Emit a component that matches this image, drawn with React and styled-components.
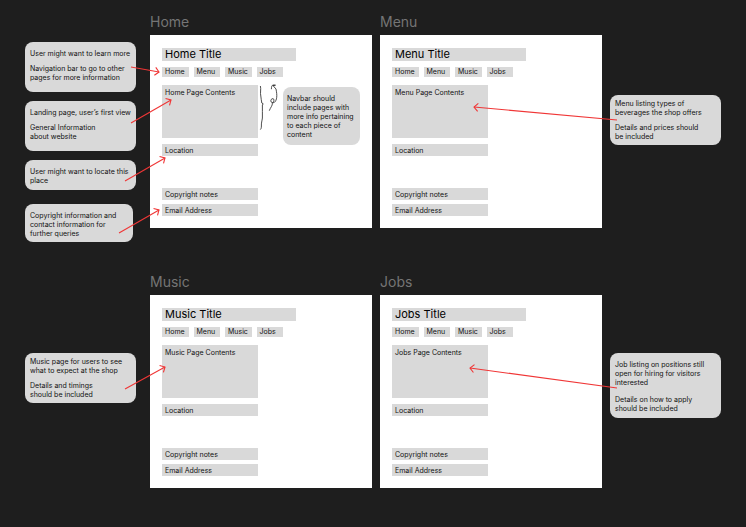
import React from "react";
import styled, { createGlobalStyle } from "styled-components";

const GlobalStyle = createGlobalStyle`
  *, *::before, *::after { box-sizing: border-box; }
  body {
    margin: 0;
    background: #1e1e1e;
    color: #111111;
    font-family: Inter, "Liberation Sans", sans-serif;
  }
  h1, h2, p { margin: 0; font-weight: 400; }
`;

const Canvas = styled.main`
  position: relative;
  display: flex;
  flex-direction: column;
  gap: 31px;
  min-width: 746px;
  min-height: 100vh;
  padding: 13px 25px 39px;
  font-size: 7px;
  line-height: 9px;
`;

const Band = styled.section`
  display: grid;
  grid-template-columns: 117px 1fr 1fr 111px;
  align-items: start;
  column-gap: 8px;
`;

const NoteColumn = styled.aside`
  display: flex;
  flex-direction: column;
  align-items: flex-start;
  gap: 9px;
  padding-top: ${(p) => p.$top}px;
`;

const Note = styled.div`
  width: ${(p) => p.$width || 111}px;
  margin-top: ${(p) => p.$spaced || 0}px;
  padding: ${(p) => (p.$tight ? 4 : 7)}px ${(p) => p.$inset || 5}px ${(p) => p.$bottom}px;
  border-radius: 8px;
  background: #d9d9d9;
  white-space: nowrap;

  p + p { margin-top: ${(p) => p.$gap || 6}px; }
`;

const Screen = styled.article`
  display: flex;
  flex-direction: column;
  gap: 4px;
`;

const ScreenName = styled.h1`
  color: #757575;
  font-size: 14px;
  line-height: 18px;
`;

const Frame = styled.div`
  padding: 13px 12px 12px;
  background: #ffffff;
`;

const TitleBar = styled.h2`
  width: 134px;
  padding-left: 3px;
  background: #d9d9d9;
  color: #000000;
  font-size: 11px;
  line-height: 13px;
`;

const Nav = styled.nav`
  display: flex;
  gap: 5px;
  width: 121px;
  margin: 6px 0 8px;
`;

const NavLink = styled.a`
  flex: 1;
  padding-left: 3px;
  background: #d9d9d9;
  color: inherit;
  line-height: 10px;
  text-decoration: none;
`;

const Body = styled.div`
  display: flex;
`;

const Blocks = styled.div`
  display: flex;
  flex-direction: column;
  width: 96px;
`;

const Block = styled.div`
  min-height: ${(p) => (p.$tall ? 53 : 12)}px;
  margin-top: ${(p) => p.$above || 0}px;
  padding: ${(p) => (p.$tall ? 3 : 2)}px 3px 1px;
  background: #d9d9d9;
`;

const FrameNote = styled.div`
  display: flex;
  align-items: flex-start;
  gap: 3px;
  padding-left: 2px;
`;

const Sketch = styled.svg`
  width: 20px;
  height: 46px;
  overflow: visible;
  fill: none;
  stroke: #222222;
  stroke-width: 0.8;
`;

const Arrows = styled.svg`
  position: absolute;
  top: 0;
  left: 0;
  width: 746px;
  height: 527px;
  pointer-events: none;
  fill: none;
  stroke: #f03636;
  stroke-width: 1.1;
`;

const arrows = [
  [131, 67, 159, 72],
  [131, 123, 171, 100],
  [125, 181, 165, 158],
  [119, 233, 159, 210],
  [617, 120, 474, 107],
  [125, 389, 165, 367],
  [617, 388, 470, 368],
];

function Arrow({ from: [x1, y1, x2, y2] }) {
  const angle = (Math.atan2(y2 - y1, x2 - x1) * 180) / Math.PI;
  return (
    <g>
      <path d={`M${x1} ${y1}L${x2} ${y2}`} />
      <path d="M-4 -4L0 0L-4 4" transform={`translate(${x2} ${y2}) rotate(${angle})`} />
    </g>
  );
}

function Wireframe({ name, children }) {
  return (
    <Screen>
      <ScreenName>{name}</ScreenName>
      <Frame>
        <TitleBar>{name} Title</TitleBar>
        <Nav aria-label={`${name} navigation`}>
          {["Home", "Menu", "Music", "Jobs"].map((item) => (
            <NavLink key={item} href={`#${item.toLowerCase()}`}>{item}</NavLink>
          ))}
        </Nav>
        <Body>
          <Blocks>
            <Block $tall>{name} Page Contents</Block>
            <Block $above={6}>Location</Block>
            <Block $above={32}>Copyright notes</Block>
            <Block $above={4}>Email Address</Block>
          </Blocks>
          {children}
        </Body>
      </Frame>
    </Screen>
  );
}

export default function App() {
  return (
    <>
      <GlobalStyle />
      <Canvas>
        <Band>
          <NoteColumn $top={29}>
            <Note $bottom={10}>
              <p>User might want to learn more</p>
              <p>Navigation bar to go to other<br />pages for more information</p>
            </Note>
            <Note $bottom={10}>
              <p>Landing page, user’s first view</p>
              <p>General Information<br />about website</p>
            </Note>
            <Note $bottom={5}>
              <p>User might want to locate this<br />place</p>
            </Note>
            <Note $width={108} $spaced={5} $bottom={4}>
              <p>Copyright information and<br />contact information for<br />further queries</p>
            </Note>
          </NoteColumn>
          <Wireframe name="Home">
            <FrameNote>
              <Sketch viewBox="0 0 20 46" aria-hidden="true">
                <path d="M0.4 1C1.2 4 0 8 0.8 11C1.5 13 1 16 1.8 18L3.2 18.8L2.4 20C2 24 2.8 29 2.4 33C2 36 1.2 38 1.4 41C1.4 43 1 44 0.3 44.6" />
                <path d="M11.4 4.2C11.4 1.5 12 0.2 13 0L15.5 0.2L13 0.6L16 4C16.6 7 17 10 16.7 12.3C16.5 14.5 15.6 16.4 14.6 17.2C12.8 18.4 10.8 17.6 10.8 15.8C10.8 13.8 13 13 13.8 14.2C14.4 15.6 13.2 17.2 12.4 18.2C12.6 20.6 10.4 22.6 9.3 25.7" />
              </Sketch>
              <Note as="aside" $width={77} $inset={4} $spaced={2} $bottom={6}>
                <p>Navbar should<br />include pages with<br />more info pertaining<br />to each piece of<br />content</p>
              </Note>
            </FrameNote>
          </Wireframe>
          <Wireframe name="Menu" />
          <NoteColumn $top={82}>
            <Note $tight $bottom={4}>
              <p>Menu listing types of<br />beverages the shop offers</p>
              <p>Details and prices should<br />be included</p>
            </Note>
          </NoteColumn>
        </Band>
        <Band>
          <NoteColumn $top={80}>
            <Note $tight $bottom={4}>
              <p>Music page for users to see<br />what to expect at the shop</p>
              <p>Details and timings<br />should be included</p>
            </Note>
          </NoteColumn>
          <Wireframe name="Music" />
          <Wireframe name="Jobs" />
          <NoteColumn $top={80}>
            <Note $gap={8} $bottom={5}>
              <p>Job listing on positions still<br />open for hiring for visitors<br />interested</p>
              <p>Details on how to apply<br />should be included</p>
            </Note>
          </NoteColumn>
        </Band>
        <Arrows viewBox="0 0 746 527" aria-hidden="true">
          {arrows.map((points) => <Arrow key={points.join()} from={points} />)}
        </Arrows>
      </Canvas>
    </>
  );
}
